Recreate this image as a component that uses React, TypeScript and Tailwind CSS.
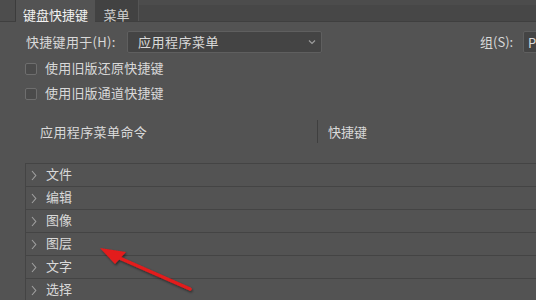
import React from "react";

const rows = ["文件", "编辑", "图像", "图层", "文字", "选择"];

const Chevron = () => (
  <svg width="6" height="11" viewBox="0 0 6 11" className="shrink-0">
    <polyline points="1,1 4.8,5.5 1,10" fill="none" stroke="#a0a0a0" strokeWidth="1.1" />
  </svg>
);

const Checkbox = ({ label }: { label: string }) => (
  <div className="flex h-[25px] items-center pl-[25px]">
    <div className="h-[12px] w-[12px] rounded-[2px] border border-[#6e6e6e] bg-[#4b4b4b]" />
    <span className="ml-[8px] pb-[2px] tracking-[0.2px]">{label}</span>
  </div>
);

export default function App() {
  return (
    <div
      className="relative h-[300px] w-[536px] overflow-hidden bg-[#535353] text-[13px] leading-none text-[#d9d9d9]"
      style={{ fontFamily: '"Noto Sans CJK SC", "Noto Sans", sans-serif' }}
    >
      {/* 标签栏 */}
      <div className="flex h-[22px] border-b border-[#3f3f3f] bg-[#474747]">
        <div className="w-[16px] border-r border-[#3c3c3c] bg-[#4d4d4d]" />
        <div className="-mb-px flex w-[79px] items-start justify-center bg-[#535353] pt-[8px] text-[#f2f2f2]">
          键盘快捷键
        </div>
        <div className="flex w-[44px] items-start justify-center border-r border-[#555] bg-[#424242] pt-[8px] text-[#cfcfcf]">
          菜单
        </div>
        <div className="flex-1 border-t-[5px] border-[#4c4c4c]" />
      </div>

      {/* 快捷键用于 */}
      <div className="mt-[9px] flex h-[22px] items-center">
        <div className="w-[127px] shrink-0 whitespace-nowrap pb-[1px] pl-[26px] tracking-[0.3px]">
          快捷键用于(H):
        </div>
        <div className="flex h-[22px] w-[195px] shrink-0 items-center justify-between rounded-[2px] border border-[#5f5f5f] bg-[#444444] pl-[10px] pr-[5px]">
          <span className="pb-[1px] tracking-[0.5px]">应用程序菜单</span>
          <svg width="8" height="6" viewBox="0 0 8 6">
            <polyline points="1,1.5 4,4.5 7,1.5" fill="none" stroke="#9c9c9c" strokeWidth="1.2" />
          </svg>
        </div>
        <div className="ml-[158px] w-[34px] shrink-0 whitespace-nowrap pb-[1px]">组(S):</div>
        <div className="ml-[9px] flex h-[22px] w-[40px] shrink-0 items-center rounded-[2px] border border-[#5f5f5f] bg-[#444444] pl-[4px]">
          P
        </div>
      </div>

      {/* 复选框 */}
      <div className="mt-[3px]">
        <Checkbox label="使用旧版还原快捷键" />
        <Checkbox label="使用旧版通道快捷键" />
      </div>

      {/* 表头 */}
      <div className="mt-[14px] flex h-[23px] items-center">
        <div className="w-[317px] shrink-0 pb-[1px] pl-[40px] tracking-[0.4px]">应用程序菜单命令</div>
        <div className="h-[23px] w-px bg-[#3f3f3f]" />
        <div className="pb-[1px] pl-[10px]">快捷键</div>
      </div>

      {/* 列表 */}
      <div className="ml-[25px] mt-[20px] border-l border-t border-[#444444]">
        {rows.map((r) => (
          <div
            key={r}
            className="flex h-[23px] items-center border-b border-[#444444] pl-[5px]"
          >
            <Chevron />
            <span className="ml-[9px] pb-[3px]">{r}</span>
          </div>
        ))}
      </div>

      {/* 红色箭头 */}
      <svg
        className="pointer-events-none absolute left-0 top-0"
        width="536"
        height="300"
        viewBox="0 0 536 300"
      >
        <defs>
          <filter id="sh" x="-20%" y="-20%" width="140%" height="140%">
            <feDropShadow dx="1" dy="1.5" stdDeviation="1.2" floodColor="#000" floodOpacity="0.5" />
          </filter>
        </defs>
        <g filter="url(#sh)">
          <line x1="190" y1="289" x2="115" y2="256" stroke="#e31b1b" strokeWidth="3.5" strokeLinecap="round" />
          <polygon points="100,248 126,252 115,264" fill="#e31b1b" />
        </g>
      </svg>
    </div>
  );
}
